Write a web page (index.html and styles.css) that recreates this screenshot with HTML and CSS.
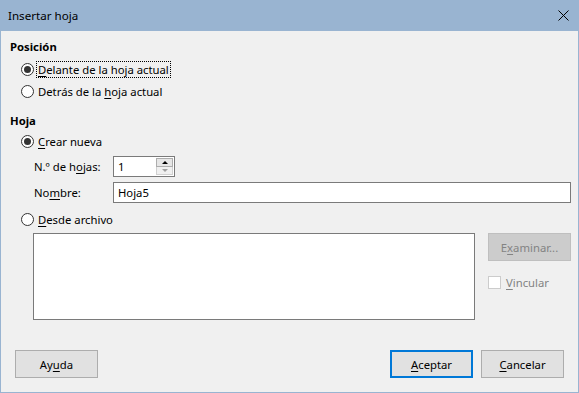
FILE: index.html
```html
<!DOCTYPE html>
<html lang="es">
<head>
<meta charset="utf-8">
<title>Insertar hoja</title>
<link rel="stylesheet" href="styles.css">
</head>
<body>
<div class="window">
  <div class="titlebar">
    <span class="title">Insertar hoja</span>
    <svg class="close" width="11" height="11" viewBox="0 0 11 11"><path d="M0.5 0.5 L10.5 10.5 M10.5 0.5 L0.5 10.5" stroke="#000" stroke-width="1" fill="none"/></svg>
  </div>
  <div class="body">
    <div class="heading">Posición</div>
    <div class="row radio-row">
      <span class="radio checked"></span>
      <span class="label focus"><u>D</u>elante de la hoja actual</span>
    </div>
    <div class="row radio-row">
      <span class="radio"></span>
      <span class="label">Detrás de la <u>h</u>oja actual</span>
    </div>
    <div class="heading heading-hoja">Hoja</div>
    <div class="row radio-row short">
      <span class="radio checked"></span>
      <span class="label"><u>C</u>rear nueva</span>
    </div>
    <div class="field-row first">
      <span class="field-label">N.º de h<u>o</u>jas:</span>
      <div class="spin">
        <span class="spin-value">1</span>
        <div class="spin-buttons">
          <span class="spin-btn up"><span class="arrow-up"></span></span>
          <span class="spin-btn down"><span class="arrow-down"></span></span>
        </div>
      </div>
    </div>
    <div class="field-row">
      <span class="field-label">No<u>m</u>bre:</span>
      <div class="textbox">Hoja5</div>
    </div>
    <div class="row radio-row desde">
      <span class="radio"></span>
      <span class="label"><u>D</u>esde archivo</span>
    </div>
    <div class="file-row">
      <div class="listbox"></div>
      <div class="file-side">
        <div class="btn disabled">E<u>x</u>aminar...</div>
        <div class="check-row">
          <span class="checkbox"></span>
          <span class="label disabled-text"><u>V</u>incular</span>
        </div>
      </div>
    </div>
    <div class="footer">
      <div class="btn">Ay<u>u</u>da</div>
      <div class="footer-right">
        <div class="btn default"><u>A</u>ceptar</div>
        <div class="btn"><u>C</u>ancelar</div>
      </div>
    </div>
  </div>
</div>
</body>
</html>
```
FILE: styles.css
```css
* { box-sizing: border-box; }
html, body { margin: 0; padding: 0; }
body {
  width: 579px;
  height: 393px;
  overflow: hidden;
  font-family: "Noto Sans", "Open Sans", sans-serif;
  font-size: 11.3px;
  color: #000;
  background: #f0f0f0;
}
u { text-decoration: underline; text-underline-offset: 2px; text-decoration-thickness: 1px; }

.window {
  width: 579px;
  height: 393px;
  border: 1px solid #99b4d1;
  border-top: none;
  background: #f0f0f0;
  display: flex;
  flex-direction: column;
}
.titlebar {
  height: 31px;
  margin: 0 -1px;
  background: #99b4d1;
  display: flex;
  align-items: center;
  justify-content: space-between;
  padding: 0 10px 1px 8px;
  flex: none;
}
.title { font-size: 11.6px; }
.close { display: block; }

.body {
  flex: 1;
  display: flex;
  flex-direction: column;
  padding: 5px 7px 14px 9px;
}
.heading {
  height: 22px;
  line-height: 22px;
  font-weight: bold;
}
.heading-hoja { margin-top: 9px; height: 20px; line-height: 20px; }

.row {
  display: flex;
  align-items: center;
}
.radio-row {
  height: 22px;
  margin-left: 11px;
}
.radio-row.short { height: 20px; }
.radio-row.desde { margin-top: 5px; }
.radio {
  width: 13px;
  height: 13px;
  border: 1px solid #333;
  border-radius: 50%;
  background: #fff;
  flex: none;
  margin-right: 4px;
  position: relative;
}
.radio.checked::after {
  content: "";
  position: absolute;
  left: 2px;
  top: 2px;
  width: 7px;
  height: 7px;
  border-radius: 50%;
  background: #333;
}
.label { line-height: 15px; }
.focus {
  outline: 1px dotted #000;
  outline-offset: 0;
  margin-left: -1px;
  padding: 0 1px;
}

.field-row {
  display: flex;
  align-items: center;
  height: 21px;
  margin-left: 24px;
  margin-top: 5px;
}
.field-label { width: 79px; flex: none; }
.spin {
  width: 62px;
  height: 21px;
  border: 1px solid #7a7a7a;
  background: #fff;
  display: flex;
  align-items: center;
  justify-content: space-between;
  padding: 1px 1px 1px 4px;
}
.spin-value { line-height: 17px; }
.spin-buttons {
  display: flex;
  flex-direction: column;
  width: 17px;
  height: 17px;
}
.spin-btn {
  flex: 1;
  display: flex;
  align-items: center;
  justify-content: center;
  background: #e6e6e6;
  border: 1px solid #adadad;
}
.spin-btn.down { background: #f0f0f0; border-color: #d0d0d0; border-top: none; }
.arrow-up {
  width: 0; height: 0;
  border-left: 3px solid transparent;
  border-right: 3px solid transparent;
  border-bottom: 3px solid #000;
}
.arrow-down {
  width: 0; height: 0;
  border-left: 3px solid transparent;
  border-right: 3px solid transparent;
  border-top: 3px solid #a0a0a0;
}
.textbox {
  flex: 1;
  height: 21px;
  border: 1px solid #7a7a7a;
  background: #fff;
  padding: 0 4px;
  line-height: 19px;
}

.file-row {
  display: flex;
  margin-top: 3px;
  margin-left: 23px;
  gap: 13px;
}
.listbox {
  width: 442px;
  height: 87px;
  border: 1px solid #7a7a7a;
  background: #fff;
}
.file-side { display: flex; flex-direction: column; }
.btn {
  width: 83px;
  height: 28px;
  border: 1px solid #adadad;
  background: #e1e1e1;
  display: flex;
  align-items: center;
  justify-content: center;
}
.btn.disabled {
  background: #cccccc;
  border-color: #bfbfbf;
  color: #838383;
}
.btn.default { border: 2px solid #0078d7; }
.check-row {
  display: flex;
  align-items: center;
  margin-top: 14px;
}
.checkbox {
  width: 13px;
  height: 13px;
  border: 1px solid #cccccc;
  background: #fff;
  margin-right: 5px;
}
.disabled-text { color: #838383; }

.footer {
  margin-top: auto;
  display: flex;
  justify-content: space-between;
  padding-left: 5px;
  padding-right: 7px;
}
.footer-right { display: flex; gap: 8px; }
```
